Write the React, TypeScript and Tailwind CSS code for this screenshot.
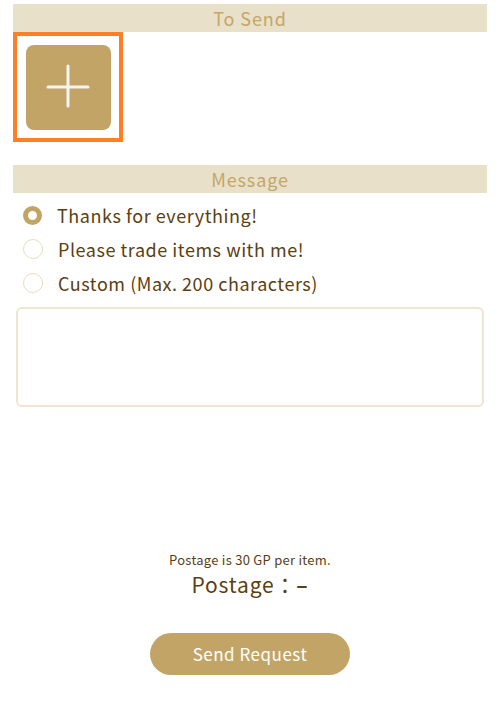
import { useState } from "react";

const options = [
  "Thanks for everything!",
  "Please trade items with me!",
  "Custom (Max. 200 characters)",
];

const SectionHeader = ({ title }: { title: string }) => (
  <div className="mx-[13px] flex h-[28px] items-center justify-center bg-[#e9e0ca] text-[18px] tracking-[0.05em] text-[#c4a666]">
    {title}
  </div>
);

export default function App() {
  const [selected, setSelected] = useState(0);

  return (
    <div
      className="flex h-[705px] w-[500px] flex-col bg-white"
      style={{ fontFamily: '"Noto Sans CJK JP", "Noto Sans", sans-serif' }}
    >
      {/* To Send */}
      <div className="pt-[4px]">
        <SectionHeader title="To Send" />
        <div className="mx-[13px] flex h-[110px] w-[110px] items-center justify-center border-4 border-[#ff7f27]">
          <button className="flex h-[85px] w-[85px] items-center justify-center rounded-lg bg-[#c2a566]">
            <svg width="48" height="48" viewBox="0 0 48 48">
              <path d="M24 3v40M4 24h40" stroke="#f4f4f6" strokeWidth="3" strokeLinecap="round" />
            </svg>
          </button>
        </div>
      </div>

      {/* Message */}
      <div className="mt-[23px]">
        <SectionHeader title="Message" />
        <div className="mt-[5px] flex flex-col">
          {options.map((label, i) => (
            <button
              key={label}
              onClick={() => setSelected(i)}
              className="flex h-[34px] items-center gap-[15px] pl-[23px] text-left"
            >
              {selected === i ? (
                <span className="h-[19px] w-[19px] rounded-full border-[5px] border-[#c2a566] bg-white" />
              ) : (
                <span className="h-[20px] w-[20px] rounded-full border border-[#e9dcc0] bg-white" />
              )}
              <span className="text-[18px] tracking-[0.03em] text-[#5a4012]">{label}</span>
            </button>
          ))}
        </div>
        <textarea className="mx-[16px] mt-[7px] block h-[100px] w-[468px] resize-none rounded-md border-2 border-[#efe5d1] outline-none" />
      </div>

      {/* Postage */}
      <div className="mt-[143px] flex flex-col items-center text-[#5a4012]">
        <p className="text-[13px] tracking-[0.02em]">Postage is 30 GP per item.</p>
        <p className="text-[21px] leading-[28px] tracking-[0.04em]">
          Postage：<span className="font-bold">–</span>
        </p>
        <button className="mt-[35px] h-[42px] w-[200px] rounded-full bg-[#c2a566] text-[17px] tracking-[0.03em] text-white">
          Send Request
        </button>
      </div>
    </div>
  );
}
